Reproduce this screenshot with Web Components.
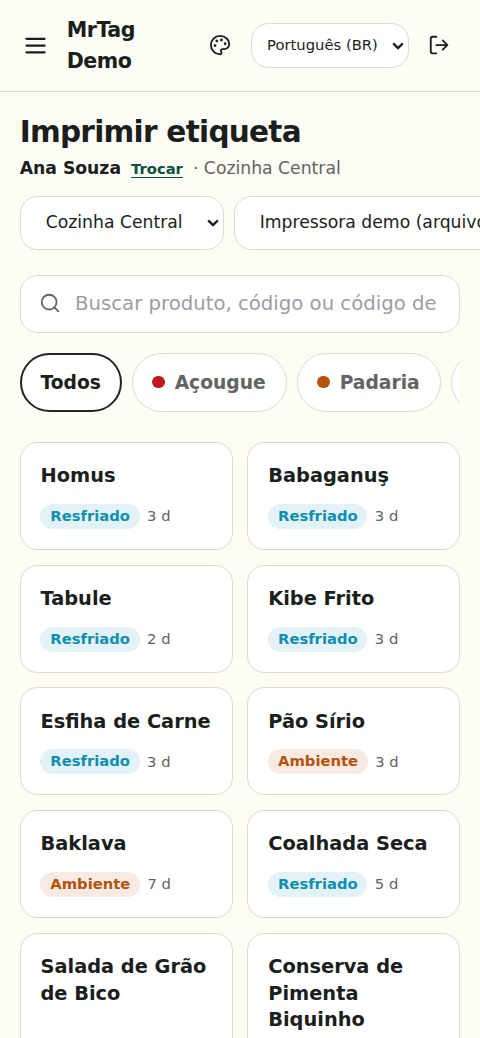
<!DOCTYPE html>
<html lang="pt-BR">
<head>
<meta charset="utf-8">
<title>MrTag Demo</title>
<style>
html,body{margin:0;height:100%;overflow:hidden}
body{background:#fdfcf5;color:#1a1e1c;font-family:"DejaVu Sans",sans-serif;--line:#dfdaca;--muted:#5e6562;--card:#fff}
</style>
</head>
<body>
<print-page></print-page>
<script>
function define(name, html){
  const t=document.createElement('template');
  t.innerHTML=html;
  customElements.define(name, class extends HTMLElement{
    constructor(){super();this.attachShadow({mode:'open'}).append(t.content.cloneNode(true));}
  });
}
define('app-header', `<style>
:host{display:flex;align-items:center;box-sizing:border-box;height:92px;border-bottom:1px solid #dcdbd2;padding:0 29.6px 0 22px}
svg{display:block;flex:none;fill:none;stroke:currentColor;stroke-width:2;stroke-linecap:round;stroke-linejoin:round}
.brand{margin-left:17.7px;width:100px;font-weight:700;font-size:20.6px;line-height:30.5px;letter-spacing:-.52px}
.pal{margin-left:42.5px}.lang{margin-left:19.8px}.out{margin-left:19.7px}
</style>
<svg width="27.1" height="27.1" viewBox="0 0 24 24"><path d="M4 6h16M4 12h16M4 18h16"/></svg>
<div class="brand">MrTag<br>Demo</div>
<svg class="pal" width="22.15" height="22.15" viewBox="0 0 24 24"><g fill="currentColor" stroke-width="1.6"><circle cx="13.5" cy="6.5" r=".7"/><circle cx="17.5" cy="10.5" r=".7"/><circle cx="8.5" cy="7.5" r=".7"/><circle cx="6.5" cy="12.5" r=".7"/></g><path d="M12 2C6.5 2 2 6.5 2 12s4.5 10 10 10c.926 0 1.648-.746 1.648-1.688 0-.437-.18-.835-.437-1.125-.29-.289-.438-.652-.438-1.125a1.64 1.64 0 0 1 1.668-1.668h1.996c3.051 0 5.555-2.503 5.555-5.554C21.965 6.012 17.461 2 12 2z"/></svg>
<select-box class="lang" size="sm" style="--w:157.5px">Português (BR)</select-box>
<svg class="out" width="22.15" height="22.15" viewBox="0 0 24 24"><path d="M9 21H5a2 2 0 0 1-2-2V5a2 2 0 0 1 2-2h4M16 17l5-5-5-5M21 12H9"/></svg>`);
define('select-box', `<style>
:host{display:flex;align-items:center;justify-content:space-between;box-sizing:border-box;flex:none;width:var(--w);height:53.5px;border:1.2px solid var(--line);border-radius:17.5px;background:var(--card);padding:0 4px 2px 25px;font-size:17.23px;white-space:nowrap}
:host([size=sm]){height:44.5px;border-radius:17.5px;padding:0 4px 2px 15px;font-size:14.77px}
svg{display:block;flex:none;fill:none;stroke:currentColor;stroke-width:2.4}
svg{position:relative;top:1px}
</style><span><slot></slot></span><svg width="12" height="8" viewBox="0 0 12 8"><path d="M1.2 1.4 6 6.1 10.8 1.4"/></svg>`);
define('page-heading', `<style>
:host{display:block}
h1{margin:0;font-size:29.54px;line-height:37px;letter-spacing:-.74px;position:relative;top:1px}
.sub{display:flex;align-items:baseline;font-size:17.23px;line-height:26px;margin-top:5px;color:var(--muted);white-space:pre}
b{color:#1a1e1c}
a{color:#06513c;font-size:14.77px;font-weight:700;text-decoration:underline;text-underline-offset:3px;margin:0 10px}
</style><h1><slot></slot></h1><div class="sub"><b>Ana Souza</b><a>Trocar</a><span>· Cozinha Central</span></div>`);
define('search-field', `<style>
:host{display:flex;align-items:center;box-sizing:border-box;height:58.5px;border:1.2px solid var(--line);border-radius:17.5px;background:var(--card);padding:0 20px 1px 18.8px;font-size:19.69px;color:#9a9ea5;white-space:nowrap}
svg{display:block;flex:none;fill:none;stroke:#5e6562;stroke-width:2;stroke-linecap:round;margin-right:13.4px}
</style><svg width="22.15" height="22.15" viewBox="0 0 24 24"><circle cx="11" cy="11" r="8"/><path d="m21 21-4.35-4.35"/></svg><span><slot></slot></span>`);
define('filter-chip', `<style>
:host{display:flex;align-items:center;box-sizing:border-box;flex:none;width:var(--w);height:59px;border:1.2px solid var(--line);border-radius:30px;background:var(--card);padding:0 0 1px 19.3px;font-weight:700;font-size:18.7px;color:var(--muted);white-space:nowrap}
:host([active]){border:2.4px solid #222624;color:#1a1e1c;padding-left:18.8px}
i{width:12.3px;height:12.3px;border-radius:50%;background:var(--dot);margin-right:10px}
:host([active]) i{display:none}
</style><i></i><slot></slot>`);
define('product-card', `<style>
:host{display:flex;flex-direction:column;box-sizing:border-box;min-height:107.9px;border:1.2px solid var(--line);border-radius:17.5px;background:var(--card);padding:20.1px 17px 18.6px 19.8px}
.name{font-weight:700;font-size:19.38px;line-height:26.5px}
.meta{display:flex;align-items:center;gap:7.4px;margin-top:14.4px;font-size:14.77px;line-height:24.5px;color:var(--muted)}
</style><div class="name"><slot></slot></div><div class="meta"><slot name="tag"></slot><slot name="days"></slot></div>`);
define('storage-tag', `<style>
:host{display:block;box-sizing:border-box;height:25px;line-height:24.5px;border-radius:13px;padding:0 9.8px;font-weight:700;font-size:14.77px;color:#0e8fb0;background:#e3f2f6}
:host([kind=amb]){color:#b45309;background:#f6eae2}
</style><slot></slot>`);
const items=[['Homus','r',3],['Babaganuş','r',3],['Tabule','r',2],['Kibe Frito','r',3],['Esfiha de Carne','r',3],['Pão Sírio','amb',3],['Baklava','amb',7],['Coalhada Seca','r',5],['Salada de Grão de Bico'],['Conserva de Pimenta Biquinho']];
define('print-page', `<style>
:host{display:block;height:1038px;overflow:hidden}
main{padding:20.5px 19.7px 0}
.selects{display:flex;gap:10px;margin:14.5px -20px 0 0;overflow:hidden}
search-field{margin-top:25px}
.chips{display:flex;gap:10.2px;overflow:hidden;margin-top:20px}
.grid{display:grid;grid-template-columns:1fr 1fr;gap:14.85px;margin-top:30px}
product-card:nth-last-child(-n+2){height:160px}
</style>
<app-header></app-header>
<main>
<page-heading>Imprimir etiqueta</page-heading>
<div class="selects"><select-box style="--w:204px">Cozinha Central</select-box><select-box style="--w:300px">Impressora demo (arquivo)</select-box></div>
<search-field>Buscar produto, código ou código de</search-field>
<div class="chips"><filter-chip active style="--w:102.2px">Todos</filter-chip><filter-chip style="--w:154.8px;--dot:#be1822">Açougue</filter-chip><filter-chip style="--w:143.6px;--dot:#b45309">Padaria</filter-chip><filter-chip style="--w:144px;--dot:#0e8fb0"></filter-chip></div>
<div class="grid">${items.map(([n,k,d])=>`<product-card>${n}${k?`<storage-tag slot="tag" kind="${k}">${k==='r'?'Resfriado':'Ambiente'}</storage-tag><span slot="days">${d} d</span>`:''}</product-card>`).join('')}</div>
</main>`);
</script>
</body>
</html>
